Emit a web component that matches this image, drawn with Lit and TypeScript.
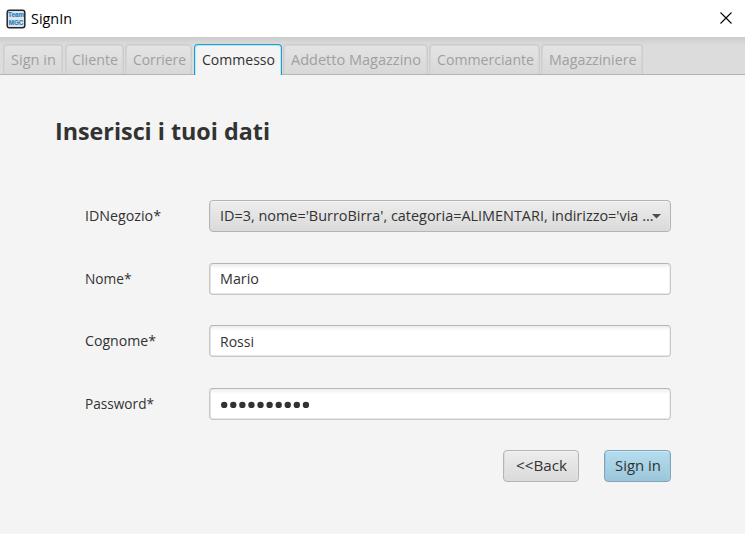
import { LitElement, html, css, svg } from "lit";
import { customElement, property } from "lit/decorators.js";
import { styleMap } from "lit/directives/style-map.js";
import { classMap } from "lit/directives/class-map.js";

/** A single-line label whose glyphs are condensed to a given width. */
@customElement("fit-text")
class FitText extends LitElement {
  @property({ type: Number }) width = 0;
  @property() text = "";

  static styles = css`
    :host { display: block; flex: none; white-space: pre; }
    .run { display: inline-block; transform-origin: 0 50%; }
  `;

  updated() {
    this.style.width = `${this.width}px`;
    const run = this.renderRoot.querySelector(".run") as HTMLElement;
    run.style.transform = "none";
    const natural = run.getBoundingClientRect().width;
    run.style.transform = `scaleX(${this.width / natural})`;
  }

  render() {
    return html`<span class="run">${this.text}</span>`;
  }
}

const tabs = [
  { label: "Sign in", box: 60, text: 45 },
  { label: "Cliente", box: 59, text: 46 },
  { label: "Corriere", box: 67, text: 53 },
  { label: "Commesso", box: 88, text: 73, selected: true },
  { label: "Addetto Magazzino", box: 144.5, text: 130 },
  { label: "Commerciante", box: 110.5, text: 97 },
  { label: "Magazziniere", box: 101.5, text: 87.5 },
];

@customElement("app-root")
class AppRoot extends LitElement {
  static styles = css`
    :host {
      display: flex; flex-direction: column; width: 745px; height: 534px;
      background: #f4f4f4; color: #323232; overflow: hidden;
      font: 15px/20px "Open Sans", "Noto Sans", sans-serif;
    }
    * { box-sizing: border-box; }
    .titlebar {
      display: flex; align-items: center; height: 37px; flex: none;
      padding: 0 12px 0 6px; background: #fff; color: #000;
    }
    .titlebar fit-text { margin-bottom: 2px; }
    .logo { display: block; margin-right: 5px; }
    .close { display: block; margin: 0 0 1px auto; }
    .tabs {
      display: flex; align-items: flex-end; gap: 1.5px; height: 38px; flex: none;
      padding-left: 3.4px; border-bottom: 1px solid #b4b4b4;
      background: linear-gradient(#cbcbcb, #dcdcdc 8px, #dcdcdc);
    }
    .tab {
      height: 30px; padding: 4px 0 0 6.4px; flex: none; color: #a0a0a0;
      border: 1px solid #cdcdcd; border-bottom: 0; border-radius: 4px 4px 0 0;
      background: linear-gradient(#e4e4e4, #d8d8d8);
      box-shadow: inset 1px 1px #d5d5d5, inset -1px 0 #d5d5d5;
    }
    .tab.selected {
      height: 31px; margin: 0 0 -1px 0; padding-left: 6.8px; color: #323232; background: #f4f4f4;
      border-color: #1a9fcf; box-shadow: inset 1px 1px #bfe3f0, inset -1px 0 #bfe3f0;
    }
    .page { display: flex; flex-direction: column; padding: 41px 74px 0 85px; }
    .heading { margin: 0 0 0 -30px; font-size: 24px; line-height: 30px; font-weight: 700; }
    .form { display: grid; grid-template-columns: 124px 462px; row-gap: 30.6px; margin-top: 54px; align-items: center; }
    .form fit-text { margin-bottom: 2px; }
    .field {
      display: flex; align-items: center; height: 32px; padding-left: 10px;
      border: 1px solid #c8c8c8; border-top-color: #b5b5b5; border-radius: 4px;
      background: linear-gradient(#ededed, #fff 5px);
      box-shadow: inset 1px 0 #e2e2e2, inset -1px 0 #f0f0f0, inset 0 -1px #e6e6e6;
    }
    .field fit-text { margin-bottom: 1px; }
    .field.select fit-text { margin-bottom: 2px; }
    .select, .button {
      background: linear-gradient(#ededed, #dadada); border-color: #b4b4b4;
      box-shadow: inset 0 1px #f4f4f4, inset 1px 0 #dcdcdc, inset -1px 0 #e6e6e6;
    }
    .arrow { width: 10px; height: 5px; margin-left: -2px; background: #4c4c4c; clip-path: polygon(0 0, 100% 0, 50% 100%); }
    .dots { display: block; }
    .actions { display: flex; justify-content: flex-end; gap: 25px; margin: 30px 0 0; }
    .button {
      display: flex; align-items: center; justify-content: center; height: 32px;
      width: 76px; border: 1px solid #b4b4b4; border-radius: 4px; padding: 0 0 1px 0;
      font: inherit; color: inherit;
    }
    .button.primary {
      width: 67px; border-color: #7fa6b8; background: linear-gradient(#b5ddef, #9bc6da);
      box-shadow: inset 0 1px #d0eaf5, inset 1px 0 #9fc8da, inset -1px 0 #a6cede;
    }
  `;

  private label(text: string, width: number) {
    return html`<fit-text .text=${text} .width=${width}></fit-text>`;
  }

  render() {
    return html`
      <header class="titlebar">
        <svg class="logo" width="20" height="20" viewBox="0 0 20 20">
          <rect x="1.2" y="1.2" width="17.6" height="17.6" rx="2.2" fill="#dfe3e8" stroke="#22262c" stroke-width="1.5" />
          <g fill="#2583c5" stroke="#2583c5" stroke-width="0.2" font-family="Liberation Sans, sans-serif" font-weight="700" font-size="6.6">
            <text x="2" y="8.3" textLength="16" lengthAdjust="spacingAndGlyphs">Team</text>
            <text x="2.8" y="16.3" textLength="14.6" lengthAdjust="spacingAndGlyphs">MGC</text>
          </g>
        </svg>
        ${this.label("SignIn", 41)}
        <svg class="close" width="14" height="14" viewBox="0 0 14 14">
          <path d="M1.5 1.5 L12.5 12.5 M12.5 1.5 L1.5 12.5" stroke="#000" stroke-width="1.1" />
        </svg>
      </header>
      <nav class="tabs">
        ${tabs.map((t) => html`
          <div class=${classMap({ tab: true, selected: !!t.selected })} style=${styleMap({ width: `${t.box}px` })}>
            ${this.label(t.label, t.text)}
          </div>`)}
      </nav>
      <main class="page">
        <h1 class="heading">${this.label("Inserisci i tuoi dati", 215)}</h1>
        <div class="form">
          ${this.label("IDNegozio*", 76)}
          <div class="field select">
            ${this.label("ID=3, nome='BurroBirra', categoria=ALIMENTARI, indirizzo='via ...", 433.5)}
            <span class="arrow"></span>
          </div>
          ${this.label("Nome*", 46.5)}
          <div class="field">${this.label("Mario", 39)}</div>
          ${this.label("Cognome*", 71)}
          <div class="field">${this.label("Rossi", 34)}</div>
          ${this.label("Password*", 69)}
          <div class="field">
            <svg class="dots" width="92" height="8" viewBox="0 0 92 8">
              ${Array.from({ length: 10 }, (_, i) => svg`<circle cx=${4.2 + i * 9.08} cy="5" r="3.2" fill="#323232" />`)}
            </svg>
          </div>
        </div>
        <div class="actions">
          <button class="button">${this.label("<<Back", 51)}</button>
          <button class="button primary">${this.label("Sign in", 46)}</button>
        </div>
      </main>
    `;
  }
}
